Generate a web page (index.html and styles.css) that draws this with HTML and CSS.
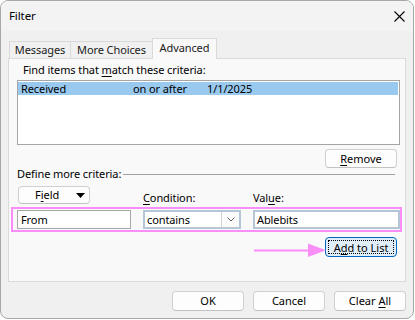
FILE: index.html
```html
<!DOCTYPE html>
<html>
<head>
<meta charset="utf-8">
<link rel="stylesheet" href="styles.css">
</head>
<body>
<div class="window">
  <div class="titlebar">
    <span class="title">Filter</span>
    <svg class="close" width="11" height="11" viewBox="0 0 11 11"><path d="M0.5 0.5 L10.5 10.5 M10.5 0.5 L0.5 10.5" stroke="#000" stroke-width="1.1" fill="none"/></svg>
  </div>
  <div class="content">
    <div class="tabs">
      <div class="tab t1">Messages</div>
      <div class="tab t2">More Choices</div>
      <div class="tab active">Advanced</div>
    </div>
    <div class="panel">
      <div class="find">Find items that <u>m</u>atch these criteria:</div>
      <div class="listbox">
        <div class="row sel"><span class="c1">Received</span><span class="c2">on or after</span><span class="c3">1/1/2025</span></div>
      </div>
      <div class="actions"><button class="btn"><u>R</u>emove</button></div>
      <div class="group"><span>Define more criteria:</span><span class="rule"></span></div>
      <div class="grid labels">
        <button class="btn field"><span>F<u>i</u>eld</span><svg class="tri" width="9" height="5" viewBox="0 0 9 5"><polygon points="0,0 9,0 4.5,5" fill="#000"/></svg></button>
        <span class="lbl"><u>C</u>ondition:</span>
        <span class="lbl">Val<u>u</u>e:</span>
      </div>
      <div class="grid inputs">
        <div class="input plain">From</div>
        <div class="input combo"><span class="ctext">contains</span><span class="dd"><svg width="8" height="5" viewBox="0 0 8 5"><polyline points="0.5,0.5 4,4 7.5,0.5" stroke="#606060" stroke-width="1" fill="none"/></svg></span></div>
        <div class="input blue">Ablebits</div>
      </div>
      <div class="addrow">
        <svg class="arrow" width="72" height="14" viewBox="0 0 72 14"><line x1="0" y1="7.5" x2="56" y2="7.5" stroke="#f98ef9" stroke-width="2"/><polygon points="54,0.5 72,7.3 54,14" fill="#f98ef9"/></svg>
        <button class="btn add"><span class="focus">A<u>d</u>d to List</span></button>
      </div>
    </div>
    <div class="footer">
      <button class="btn">OK</button>
      <button class="btn">Cancel</button>
      <button class="btn">Clear <u>A</u>ll</button>
    </div>
  </div>
</div>
</body>
</html>
```
FILE: styles.css
```css
* { box-sizing: border-box; }
html, body { margin: 0; padding: 0; background: #ffffff; }
body {
  width: 415px; height: 320px; overflow: hidden;
  font-family: "Noto Sans", "Open Sans", sans-serif;
  font-size: 11px; letter-spacing: -0.1px; color: #000;
}
u { text-decoration-thickness: 1px; text-underline-offset: 2px; }
.window {
  width: 414px; height: 319px;
  border: 1px solid #a8a8a8; border-radius: 8px;
  background: #f0f0f0; overflow: hidden;
  display: flex; flex-direction: column;
}
.titlebar {
  flex: none; height: 30px; background: #f3f3f3;
  display: flex; align-items: center; justify-content: space-between;
  padding: 0 8px 0 8px;
}
.title { line-height: 16px; color: #000; font-size: 11.5px; }
.close { display: block; }
.content { flex: 1; display: flex; flex-direction: column; padding: 7px 7px 0 7px; }
.tabs { display: flex; align-items: flex-end; height: 20px; padding-left: 1px; position: relative; z-index: 1; }
.tab {
  height: 17px; border: 1px solid #d9d9d9; border-bottom: none;
  background: #f0f0f0; line-height: 16px; text-align: center; color: #1a1a1a;
}
.t1 { width: 62px; }
.t2 { width: 83px; margin-left: -1px; }
.tab.active { width: 65px; margin-left: -1px; height: 21px; margin-bottom: -1px; line-height: 17px; background: #f9f9f9; border-color: #dadada; }
.panel {
  height: 224px; border: 1px solid #dadada; background: #f9f9f9;
  padding: 0 0 0 8px; display: flex; flex-direction: column;
}
.find { padding-top: 3px; margin-left: 6px; line-height: 16px; }
.listbox {
  margin-top: 2px; width: 383px; height: 65px; background: #fff;
  border: 1px solid #a5a5a5; padding: 1px 1px 0 0;
}
.row { display: flex; height: 13px; line-height: 13px; padding-left: 3px; }
.sel { background: #99c9ef; }
.c1 { width: 112px; }
.c2 { width: 74px; }
.actions { display: flex; justify-content: flex-end; padding-right: 8px; margin-top: 4px; }
.btn {
  font: inherit; color: #000; width: 72px; height: 19px; padding: 0;
  background: #fdfdfd; border: 1px solid #d0d0d0; border-bottom-color: #c2c2c2;
  border-radius: 4px; line-height: 16px; text-align: center;
}
.group { display: flex; align-items: center; height: 12px; line-height: 12px; }
.rule { flex: 1; height: 1px; background: #a0a0a0; margin: 0 10px 0 2px; }
.grid { display: grid; grid-template-columns: 114px 98px 147px; column-gap: 12px; }
.labels { margin-top: 6px; align-items: end; }
.field {
  margin-left: 1px; height: 18px; display: flex; align-items: center;
  padding: 0 4px 0 16px; justify-content: space-between;
}
.tri { display: block; }
.lbl { line-height: 14px; margin-bottom: -1px; }
.inputs {
  margin-left: -6px; width: 391px; margin-top: 3px;
  border: 2px solid #f98ef9; padding: 1px 0 1px 4px;
}
.input {
  height: 19px; background: #fff; line-height: 16px; padding: 0 3px;
  display: flex; align-items: center;
}
.plain { border: 1px solid #a7a7a7; }
.blue { border: 2px solid #b5c6d8; padding-left: 2px; }
.combo { border: 2px solid #b5c6d8; padding: 0 0 0 2px; justify-content: space-between; }
.ctext { flex: 1; }
.dd {
  width: 18px; height: 100%; display: flex; align-items: center; justify-content: center;
  border-left: 1px solid #d3d3d3; background: #fbfbfb;
}
.dd svg { display: block; }
.addrow { display: flex; justify-content: flex-end; align-items: flex-end; padding-right: 8px; margin-top: 5px; }
.arrow { display: block; margin-right: -1px; position: relative; z-index: 1; }
.add {
  height: 20px; background: #e0eef9; border: 1px solid #0067c0;
  padding: 2px; display: flex;
}
.focus { flex: 1; border: 1px dotted #000; line-height: 13px; }
.footer { display: flex; justify-content: flex-end; gap: 9px; margin-top: 9px; }
.footer .btn { height: 20px; }
```
